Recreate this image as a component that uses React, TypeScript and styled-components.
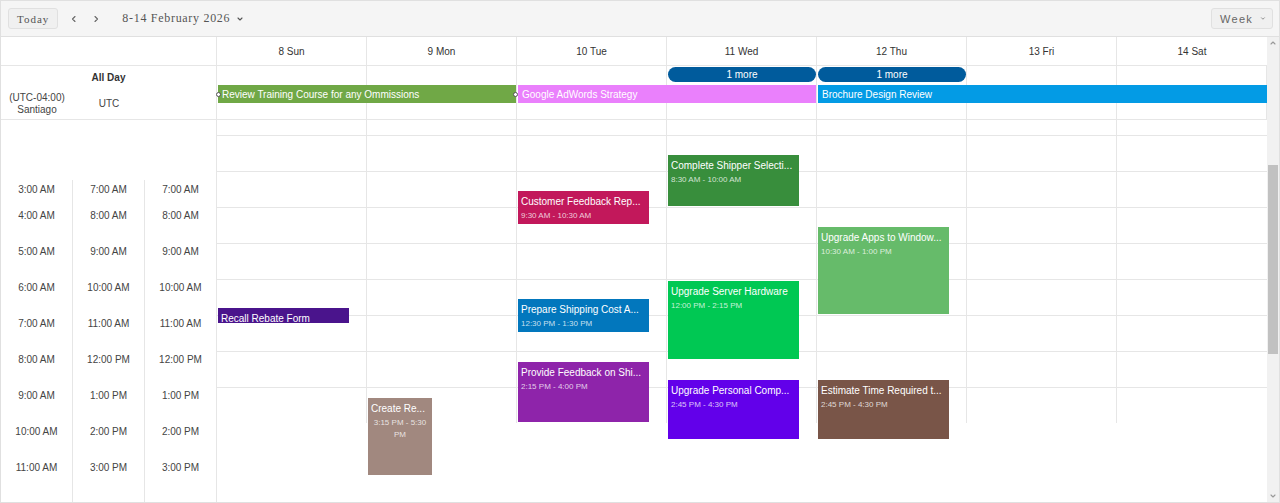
import styled, { createGlobalStyle } from "styled-components";

const GlobalStyle = createGlobalStyle`
  html, body {
    margin: 0;
    padding: 0;
    background: #ffffff;
  }
  body {
    font-family: "Liberation Sans", Arial, sans-serif;
  }
`;

const LINE = "#e6e6e6";

const Scheduler = styled.div`
  width: 1280px;
  height: 503px;
  box-sizing: border-box;
  border: 1px solid #e0e0e0;
  display: flex;
  flex-direction: column;
  overflow: hidden;
  font-family: "Liberation Sans", Arial, sans-serif;
  font-size: 10px;
  color: #333;
  background: #fff;
`;

const Toolbar = styled.div`
  height: 35px;
  flex-shrink: 0;
  box-sizing: content-box;
  border-bottom: 1px solid #e0e0e0;
  background: #f5f5f5;
  display: flex;
  align-items: center;
  padding: 0 6px 0 7px;
`;

const ToolButton = styled.button<{ serif?: boolean }>`
  height: 21px;
  box-sizing: border-box;
  border: 1px solid #e0e0e0;
  border-radius: 3px;
  background: #f0f0f0;
  padding: 0 8px;
  display: flex;
  align-items: center;
  gap: 7px;
  font-family: ${(p) =>
    p.serif ? '"Liberation Serif", "Times New Roman", serif' : '"Liberation Sans", Arial, sans-serif'};
  font-size: 11px;
  letter-spacing: 1px;
  color: ${(p) => (p.serif ? "#555" : "#666")};
  cursor: pointer;
`;

const WeekButton = styled(ToolButton)`
  margin-left: auto;
  width: 62px;
  justify-content: center;
  padding: 0 6px 0 8px;
  letter-spacing: 1.3px;
`;

const NavArrow = styled.button`
  width: 22px;
  height: 21px;
  border: none;
  background: transparent;
  display: flex;
  align-items: center;
  justify-content: center;
  padding: 0;
  cursor: pointer;
`;

const NavGroup = styled.div`
  display: flex;
  margin-left: 5px;
`;

const DateLabel = styled.div`
  margin-left: 15px;
  display: flex;
  align-items: center;
  gap: 6px;
  font-family: "Liberation Serif", "Times New Roman", serif;
  font-size: 12px;
  letter-spacing: 0.7px;
  color: #555;
`;

const Main = styled.div`
  flex: 1;
  display: flex;
  min-height: 0;
`;

const Content = styled.div`
  flex: 1;
  display: flex;
  flex-direction: column;
  min-width: 0;
`;

const Row = styled.div<{ h?: number }>`
  display: flex;
  flex-shrink: 0;
  height: ${(p) => (p.h ? `${p.h}px` : "auto")};
  border-bottom: 1px solid ${LINE};
  position: relative;
`;

const LeftCell = styled.div`
  width: 216px;
  flex-shrink: 0;
  box-sizing: border-box;
  border-right: 1px solid ${LINE};
`;

const DayCell = styled.div`
  width: 150px;
  flex-shrink: 0;
  box-sizing: border-box;
  border-right: 1px solid ${LINE};
  display: flex;
  align-items: center;
  justify-content: center;
  color: #333;
  &:last-child {
    border-right: none;
  }
`;

const AllDayLeft = styled(LeftCell)`
  display: flex;
  flex-direction: column;
  padding-top: 6px;
`;

const AllDayTitle = styled.div`
  text-align: center;
  font-weight: bold;
  line-height: 12px;
  color: #333;
`;

const ZoneRow = styled.div`
  display: grid;
  grid-template-columns: 72px 72px 1fr;
  align-items: center;
  margin-top: 8px;
  text-align: center;
  line-height: 12px;
  color: #444;
`;

const AllDayBar = styled.div<{ bg: string; selected?: boolean }>`
  position: absolute;
  height: 18px;
  top: 19px;
  background: ${(p) => p.bg};
  color: #fff;
  line-height: 18px;
  padding: 1px 0 0 4px;
  box-sizing: border-box;
  white-space: nowrap;

  ${(p) =>
    p.selected &&
    `
    &::before, &::after {
      content: "";
      position: absolute;
      top: 7px;
      width: 3px;
      height: 3px;
      border: 1px solid #555;
      border-radius: 50%;
      background: #fff;
    }
    &::before { left: -2px; }
    &::after { right: -2px; }
  `}
`;

const MorePill = styled.div`
  position: absolute;
  top: 1px;
  height: 15px;
  width: 148px;
  border-radius: 8px;
  background: #005b9c;
  color: #fff;
  line-height: 16px;
  text-align: center;
`;

const Body = styled.div`
  flex: 1;
  display: flex;
  min-height: 0;
`;

const LeftBody = styled(LeftCell)`
  display: flex;
  flex-direction: column;
`;

const TimeSpacer = styled.div`
  height: 60px;
  flex-shrink: 0;
`;

const TimeGrid = styled.div`
  flex: 1;
  display: grid;
  grid-template-columns: 72px 72px 1fr;
`;

const TimeCol = styled.div`
  box-sizing: border-box;
  border-right: 1px solid ${LINE};
  display: flex;
  flex-direction: column;
  &:last-child {
    border-right: none;
  }
`;

const TimeLabel = styled.div<{ first?: boolean }>`
  height: ${(p) => (p.first ? 17 : 36)}px;
  line-height: ${(p) => (p.first ? 17 : 36)}px;
  padding-top: 1px;
  box-sizing: border-box;
  text-align: center;
  color: #444;
  white-space: nowrap;
`;

const DayGrid = styled.div`
  flex: 1;
  display: flex;
  align-items: flex-start;
`;

const DayColumn = styled.div`
  width: 150px;
  height: 303px;
  flex-shrink: 0;
  box-sizing: border-box;
  border-right: 1px solid ${LINE};
  position: relative;
  padding-top: 15px;
  &:last-child {
    border-right: none;
  }
`;

const Slot = styled.div`
  height: 36px;
  box-sizing: border-box;
  border-top: 1px solid ${LINE};
`;

const Event = styled.div<{ bg: string }>`
  position: absolute;
  left: 1px;
  box-sizing: border-box;
  background: ${(p) => p.bg};
  color: #fff;
  padding: 5px 3px 0;
  overflow: hidden;
`;

const EventTitle = styled.div`
  font-size: 10px;
  line-height: 12px;
  white-space: nowrap;
  overflow: hidden;
`;

const EventTime = styled.div`
  display: inline-block;
  margin-top: 2px;
  font-size: 8px;
  line-height: 12px;
  text-align: center;
  color: rgba(255, 255, 255, 0.78);
`;

const Scrollbar = styled.div`
  width: 12px;
  flex-shrink: 0;
  background: #f1f1f1;
  display: flex;
  flex-direction: column;
`;

const ScrollArrow = styled.div`
  height: 12px;
  display: flex;
  align-items: center;
  justify-content: center;
`;

const ScrollTrack = styled.div`
  flex: 1;
  padding: 116px 1px 0;
`;

const ScrollThumb = styled.div`
  height: 189px;
  background: #c1c1c1;
`;

const Chevron = ({ dir, size = 8, color = "#666" }: { dir: "left" | "right" | "down" | "up"; size?: number; color?: string }) => {
  const d = {
    left: "M5 1.5 L2.5 4 L5 6.5",
    right: "M3 1.5 L5.5 4 L3 6.5",
    down: "M2 3 L4 5 L6 3",
    up: "M2 5 L4 3 L6 5",
  }[dir];
  return (
    <svg width={size} height={size} viewBox="0 0 8 8">
      <path d={d} fill="none" stroke={color} strokeWidth="1.1" strokeLinecap="round" strokeLinejoin="round" />
    </svg>
  );
};

const days = ["8 Sun", "9 Mon", "10 Tue", "11 Wed", "12 Thu", "13 Fri", "14 Sat"];

const zoneA = ["3:00 AM", "4:00 AM", "5:00 AM", "6:00 AM", "7:00 AM", "8:00 AM", "9:00 AM", "10:00 AM", "11:00 AM"];
const zoneB = ["7:00 AM", "8:00 AM", "9:00 AM", "10:00 AM", "11:00 AM", "12:00 PM", "1:00 PM", "2:00 PM", "3:00 PM"];

interface CalEvent {
  day: number;
  top: number;
  height: number;
  width: number;
  color: string;
  title: string;
  time?: string;
}

const events: CalEvent[] = [
  { day: 0, top: 188, height: 15, width: 131, color: "#4a148c", title: "Recall Rebate Form" },
  { day: 1, top: 278, height: 77, width: 64, color: "#a1887f", title: "Create Re...", time: "3:15 PM - 5:30 PM" },
  { day: 2, top: 71, height: 33, width: 131, color: "#c2185b", title: "Customer Feedback Rep...", time: "9:30 AM - 10:30 AM" },
  { day: 2, top: 179, height: 33, width: 131, color: "#0277bd", title: "Prepare Shipping Cost A...", time: "12:30 PM - 1:30 PM" },
  { day: 2, top: 242, height: 60, width: 131, color: "#8e24aa", title: "Provide Feedback on Shi...", time: "2:15 PM - 4:00 PM" },
  { day: 3, top: 35, height: 51, width: 131, color: "#388e3c", title: "Complete Shipper Selecti...", time: "8:30 AM - 10:00 AM" },
  { day: 3, top: 161, height: 78, width: 131, color: "#00c853", title: "Upgrade Server Hardware", time: "12:00 PM - 2:15 PM" },
  { day: 3, top: 260, height: 59, width: 131, color: "#6200ea", title: "Upgrade Personal Comp...", time: "2:45 PM - 4:30 PM" },
  { day: 4, top: 107, height: 87, width: 131, color: "#66bb6a", title: "Upgrade Apps to Window...", time: "10:30 AM - 1:00 PM" },
  { day: 4, top: 260, height: 59, width: 131, color: "#795548", title: "Estimate Time Required t...", time: "2:45 PM - 4:30 PM" },
];

const App = () => {
  return (
    <>
      <GlobalStyle />
      <Scheduler>
        <Toolbar>
          <ToolButton serif>Today</ToolButton>
          <NavGroup>
            <NavArrow>
              <Chevron dir="left" />
            </NavArrow>
            <NavArrow>
              <Chevron dir="right" />
            </NavArrow>
          </NavGroup>
          <DateLabel>
            8-14 February 2026
            <Chevron dir="down" color="#555" />
          </DateLabel>
          <WeekButton>
            Week
            <Chevron dir="down" size={7} color="#777" />
          </WeekButton>
        </Toolbar>

        <Main>
          <Content>
            <Row h={28}>
              <LeftCell />
              {days.map((d) => (
                <DayCell key={d}>{d}</DayCell>
              ))}
            </Row>

            <Row h={53}>
              <AllDayLeft>
                <AllDayTitle>All Day</AllDayTitle>
                <ZoneRow>
                  <div>
                    (UTC-04:00)
                    <br />
                    Santiago
                  </div>
                  <div>UTC</div>
                  <div />
                </ZoneRow>
              </AllDayLeft>
              {days.map((d) => (
                <DayCell key={d} />
              ))}
              <MorePill style={{ left: 667 }}>1 more</MorePill>
              <MorePill style={{ left: 817 }}>1 more</MorePill>
              <AllDayBar bg="#70a846" selected style={{ left: 217, width: 298 }}>
                Review Training Course for any Ommissions
              </AllDayBar>
              <AllDayBar bg="#ea80fc" style={{ left: 517, width: 298 }}>
                Google AdWords Strategy
              </AllDayBar>
              <AllDayBar bg="#039be5" style={{ left: 817, width: 449 }}>
                Brochure Design Review
              </AllDayBar>
            </Row>

            <Body>
              <LeftBody>
                <TimeSpacer />
                <TimeGrid>
                  {[zoneA, zoneB, zoneB].map((zone, zi) => (
                    <TimeCol key={zi}>
                      {zone.map((t, i) => (
                        <TimeLabel key={t} first={i === 0}>
                          {t}
                        </TimeLabel>
                      ))}
                    </TimeCol>
                  ))}
                </TimeGrid>
              </LeftBody>
              <DayGrid>
                {days.map((d, di) => (
                  <DayColumn key={d}>
                    {Array.from({ length: 8 }).map((_, i) => (
                      <Slot key={i} />
                    ))}
                    {events
                      .filter((e) => e.day === di)
                      .map((e) => (
                        <Event
                          key={e.title}
                          bg={e.color}
                          style={{ top: e.top, height: e.height, width: e.width }}
                        >
                          <EventTitle>{e.title}</EventTitle>
                          {e.time && <EventTime>{e.time}</EventTime>}
                        </Event>
                      ))}
                  </DayColumn>
                ))}
              </DayGrid>
            </Body>
          </Content>

          <Scrollbar>
            <ScrollArrow>
              <Chevron dir="up" size={8} color="#999" />
            </ScrollArrow>
            <ScrollTrack>
              <ScrollThumb />
            </ScrollTrack>
            <ScrollArrow>
              <Chevron dir="down" size={8} color="#999" />
            </ScrollArrow>
          </Scrollbar>
        </Main>
      </Scheduler>
    </>
  );
};

export default App;
